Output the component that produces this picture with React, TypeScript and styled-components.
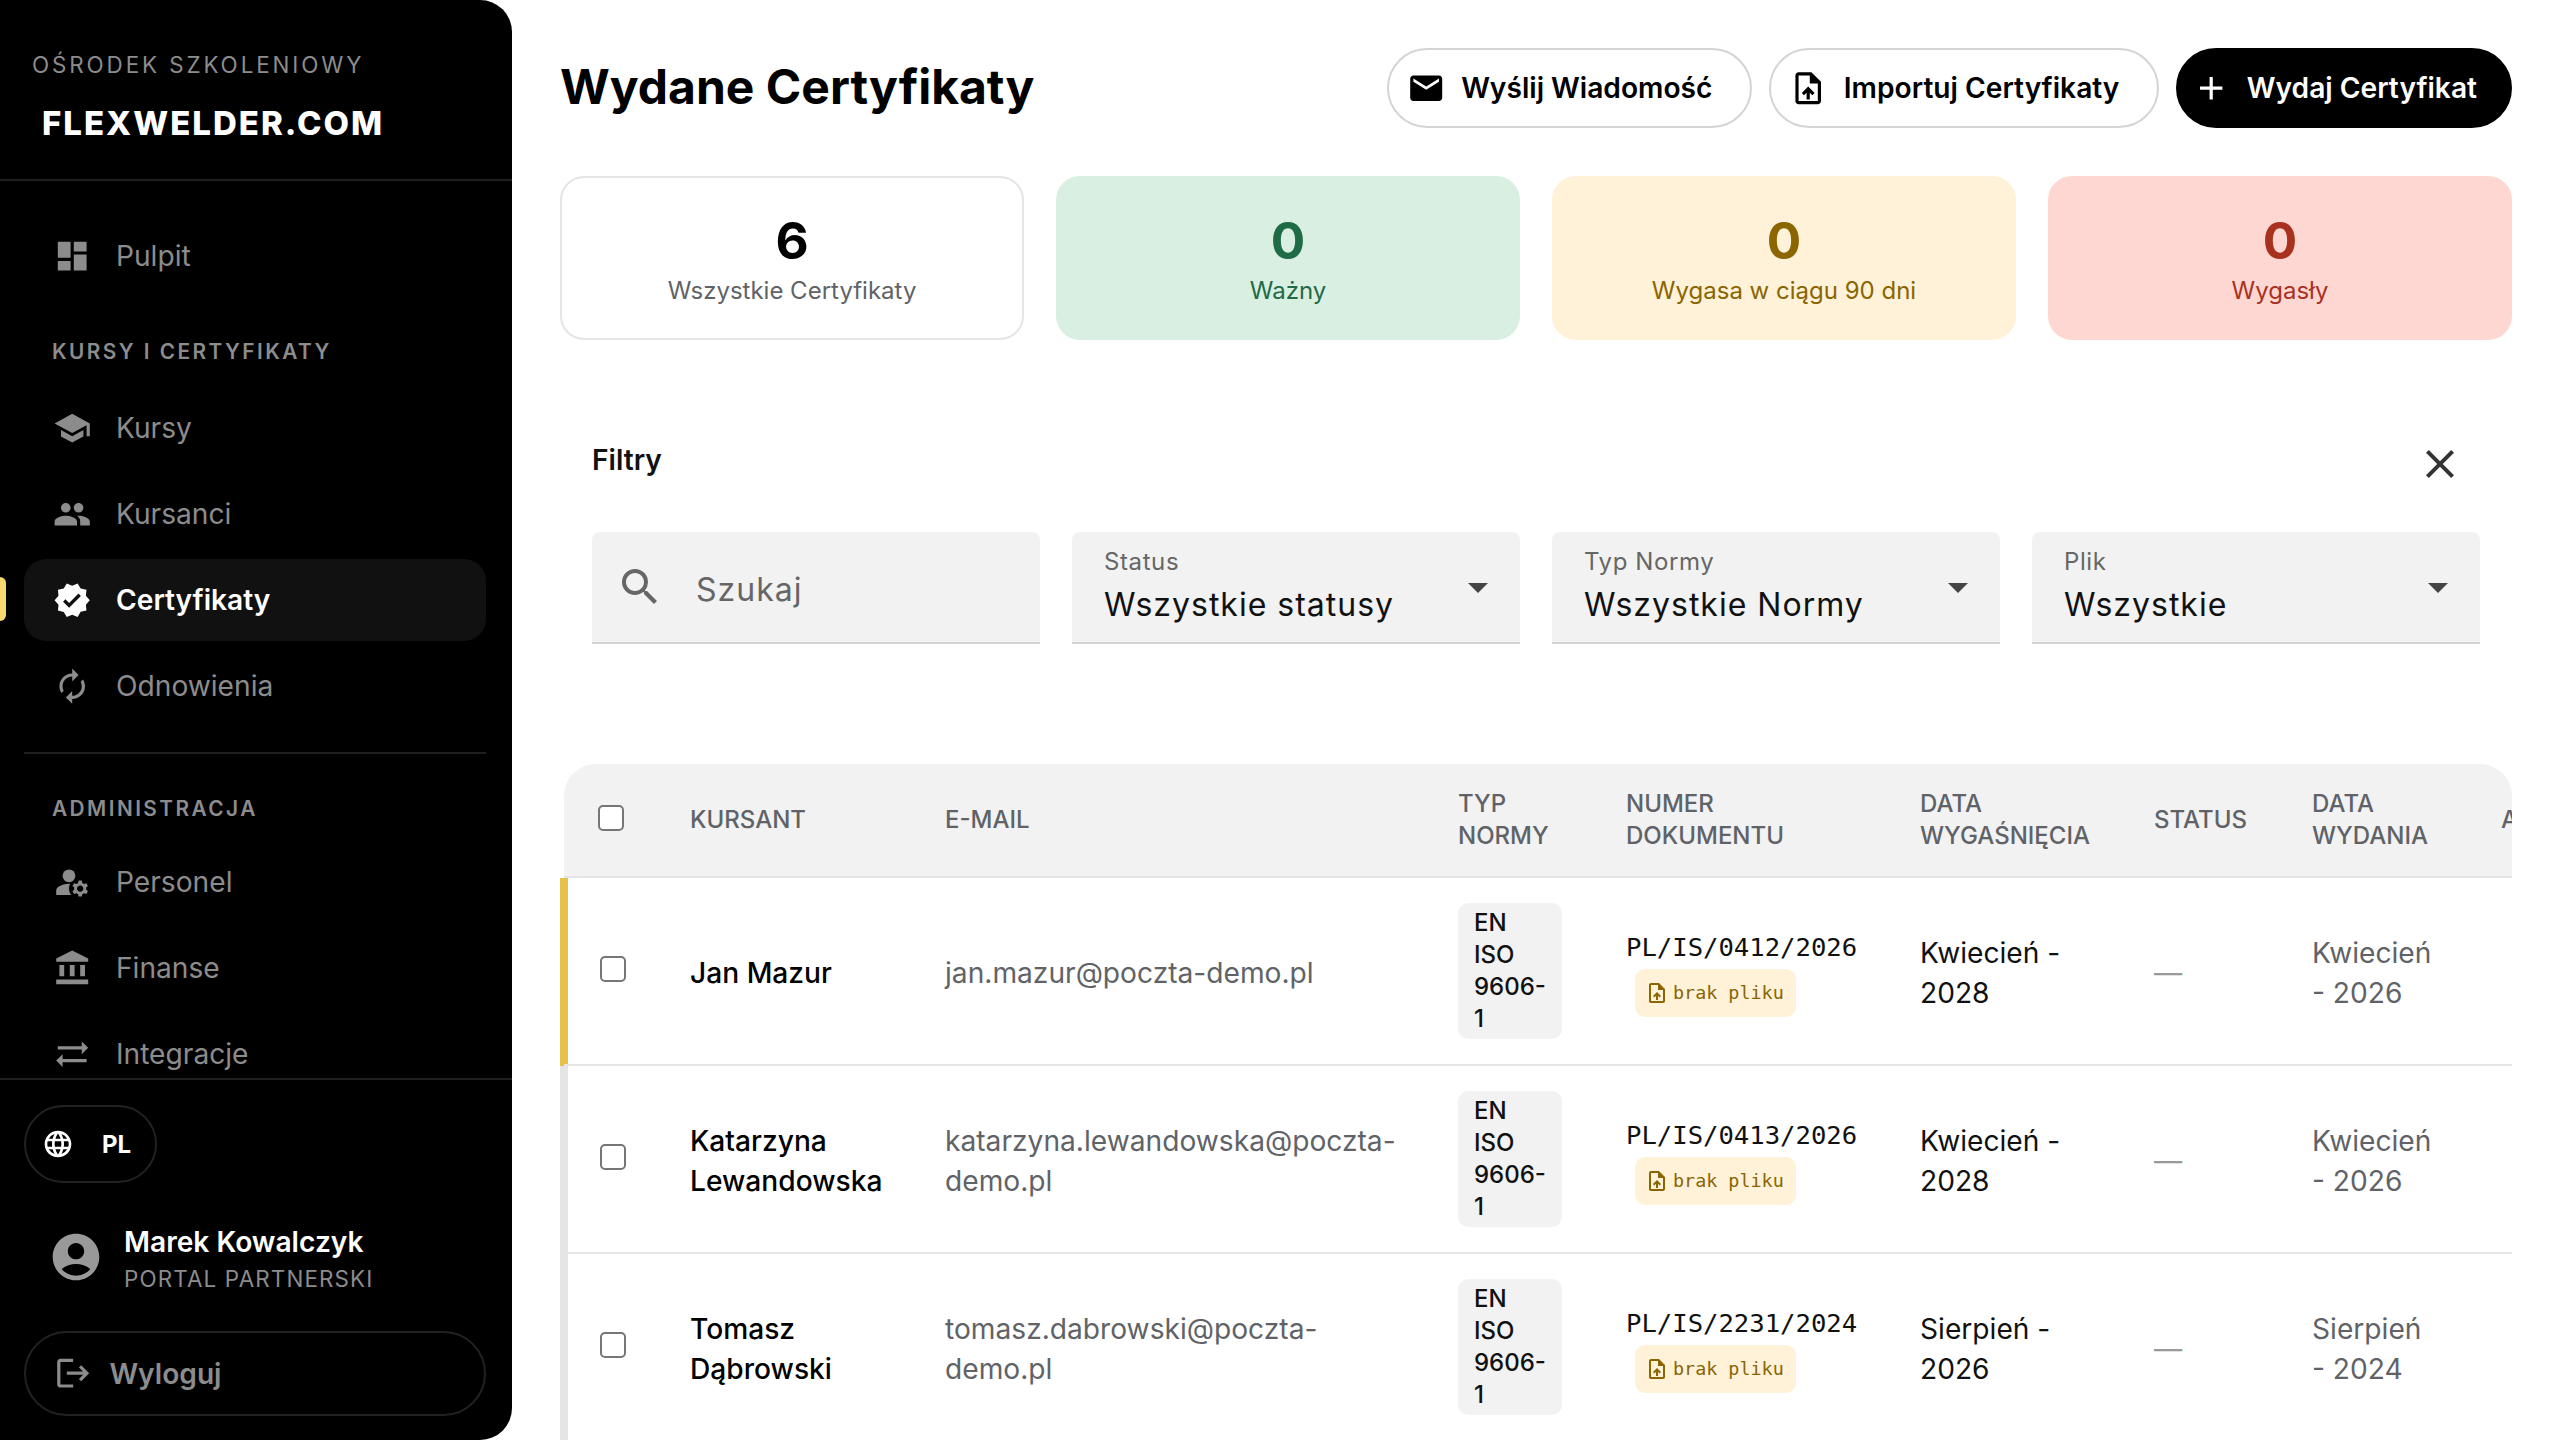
import styled, { createGlobalStyle } from 'styled-components';
import {
  MdDashboard,
  MdSchool,
  MdPeople,
  MdVerified,
  MdAutorenew,
  MdManageAccounts,
  MdAccountBalance,
  MdSyncAlt,
  MdLanguage,
  MdAccountCircle,
  MdLogout,
  MdEmail,
  MdOutlineUploadFile,
  MdAdd,
  MdClose,
  MdSearch,
  MdArrowDropDown,
} from 'react-icons/md';

const GlobalStyle = createGlobalStyle`
  html, body {
    margin: 0;
    padding: 0;
    background: #fff;
    font-family: Inter, "Noto Sans", sans-serif;
    color: #000;
  }
  * { box-sizing: border-box; }
`;

const Page = styled.div`
  width: 100%;
  height: 100vh;
  display: flex;
  overflow: hidden;
`;

const Sidebar = styled.aside`
  width: 512px;
  flex: none;
  height: 100%;
  display: flex;
  flex-direction: column;
  background: #000;
  border-radius: 0 32px 32px 0;
  overflow: hidden;
`;

const Brand = styled.div`
  height: 181px;
  flex: none;
  padding: 52px 32px 0;
  border-bottom: 2px solid #1f1f1f;
`;

const BrandCaption = styled.div`
  font-size: 22.4px;
  line-height: 26px;
  letter-spacing: 2.9px;
  color: #8c8c8c;
`;

const BrandLogo = styled.div`
  margin: 25px 0 0 10px;
  font-size: 33px;
  line-height: 40px;
  font-weight: 800;
  letter-spacing: 2px;
  color: #fff;
`;

const Nav = styled.nav`
  flex: 1;
  min-height: 0;
  overflow: hidden;
  padding: 34px 26px 0 24px;
`;

const NavItem = styled.div<{ $active?: boolean }>`
  position: relative;
  height: 82px;
  margin-bottom: 4px;
  padding-left: 29px;
  display: flex;
  align-items: center;
  gap: 24.6px;
  border-radius: 22px;
  font-size: 28.16px;
  font-weight: ${({ $active }) => ($active ? 600 : 400)};
  color: ${({ $active }) => ($active ? '#fff' : '#8c8c8c')};
  background: ${({ $active }) => ($active ? '#111' : 'transparent')};
  &::before {
    content: '';
    display: ${({ $active }) => ($active ? 'block' : 'none')};
    position: absolute;
    left: -24px;
    top: 18px;
    width: 6px;
    height: 44px;
    background: #f6d96f;
    border-radius: 0 6px 6px 0;
  }
  & svg {
    flex: none;
    font-size: 38.4px;
  }
`;

const NavSection = styled.div<{ $after: number }>`
  height: 40px;
  margin: 34px 0 ${({ $after }) => $after}px;
  padding-left: 28px;
  display: flex;
  align-items: center;
  font-size: 20.8px;
  font-weight: 600;
  letter-spacing: 2.45px;
  color: #8c8c8c;
`;

const NavDivider = styled.div`
  height: 2px;
  margin: 25px 0 32px;
  background: #1f1f1f;
`;

const SidebarFooter = styled.div`
  flex: none;
  height: 362px;
  padding: 25px 26px 0 24px;
  border-top: 2px solid #1f1f1f;
  display: flex;
  flex-direction: column;
`;

const LanguagePill = styled.div`
  width: 133px;
  height: 78px;
  padding-left: 16px;
  display: flex;
  align-items: center;
  gap: 28px;
  border: 2px solid #222;
  border-radius: 40px;
  color: #fff;
  font-size: 24px;
  font-weight: 700;
  & svg {
    font-size: 32px;
  }
`;

const UserRow = styled.div`
  margin-top: 41px;
  padding-left: 24px;
  display: flex;
  align-items: center;
  gap: 20px;
  & svg {
    flex: none;
    margin-bottom: 5.5px;
    font-size: 56px;
    color: #999;
  }
`;

const UserName = styled.div`
  font-size: 28.16px;
  line-height: 36px;
  font-weight: 600;
  color: #fff;
`;

const UserRole = styled.div`
  margin: 2.5px 0 1px;
  font-size: 22.4px;
  line-height: 32px;
  letter-spacing: 1.15px;
  color: #8c8c8c;
`;

const LogoutButton = styled.div`
  margin-top: 35.5px;
  height: 85px;
  padding-left: 28px;
  display: flex;
  align-items: center;
  gap: 17px;
  border: 2px solid #222;
  border-radius: 44px;
  color: #8c8c8c;
  font-size: 28.16px;
  font-weight: 600;
  & svg {
    font-size: 38.4px;
  }
`;

const Main = styled.main`
  flex: 1;
  min-width: 0;
  height: 100%;
  overflow: hidden;
  padding: 48px 48px 0;
`;

const TopBar = styled.header`
  height: 80px;
  display: flex;
  align-items: center;
  justify-content: space-between;
`;

const Title = styled.h1`
  margin: 0 0 4px;
  font-size: 48px;
  font-weight: 700;
`;

const Actions = styled.div`
  display: flex;
  gap: 17px;
`;

const ActionButton = styled.button<{ $primary?: boolean }>`
  height: 80px;
  padding: ${({ $primary }) => ($primary ? '0 33px 0 14px' : '0 38px 0 18px')};
  display: flex;
  align-items: center;
  gap: 16px;
  border-radius: 40px;
  border: 2px solid ${({ $primary }) => ($primary ? '#000' : '#d4d4d4')};
  background: ${({ $primary }) => ($primary ? '#000' : '#fff')};
  color: ${({ $primary }) => ($primary ? '#fff' : '#000')};
  font-family: inherit;
  font-size: 28.16px;
  font-weight: 600;
  & svg {
    font-size: 38.4px;
  }
`;

const Stats = styled.section`
  margin-top: 48px;
  display: grid;
  grid-template-columns: repeat(4, 1fr);
  gap: 32px;
`;

const tones = {
  neutral: { bg: '#fff', border: '#e5e5e5', value: '#000', label: '#5f6368' },
  green: { bg: '#d9efe2', border: '#d9efe2', value: '#1f6b45', label: '#1f6b45' },
  yellow: { bg: '#fff2d9', border: '#fff2d9', value: '#8a6500', label: '#8a6500' },
  red: { bg: '#ffd7d2', border: '#ffd7d2', value: '#a8321f', label: '#a8321f' },
};

type Tone = keyof typeof tones;

const StatCard = styled.div<{ $tone: Tone }>`
  height: 164px;
  padding-top: 2px;
  display: flex;
  flex-direction: column;
  align-items: center;
  justify-content: center;
  border-radius: 24px;
  border: 2px solid ${({ $tone }) => tones[$tone].border};
  background: ${({ $tone }) => tones[$tone].bg};
`;

const StatValue = styled.div<{ $tone: Tone }>`
  font-size: 51.2px;
  line-height: 62px;
  font-weight: 700;
  color: ${({ $tone }) => tones[$tone].value};
`;

const StatLabel = styled.div<{ $tone: Tone }>`
  margin-top: 2px;
  font-size: 24px;
  line-height: 36px;
  color: ${({ $tone }) => tones[$tone].label};
`;

const FilterPanel = styled.section`
  margin-top: 59px;
  padding: 32px;
`;

const FilterHead = styled.div`
  height: 56px;
  padding-top: 2px;
  display: flex;
  align-items: center;
  justify-content: space-between;
  font-size: 28.16px;
  font-weight: 600;
  color: #111;
  & svg {
    font-size: 48px;
    margin: 8px 16px 0 0;
    color: #333;
  }
`;

const FilterGrid = styled.div`
  margin-top: 45px;
  display: grid;
  grid-template-columns: repeat(4, 1fr);
  gap: 32px;
`;

const Field = styled.div`
  height: 112px;
  display: flex;
  align-items: center;
  background: #f2f2f2;
  border-bottom: 2px solid #d4d4d4;
  border-radius: 8px 8px 0 0;
`;

const SearchField = styled(Field)`
  padding-left: 24px;
  gap: 32px;
  & svg {
    flex: none;
    font-size: 48px;
    color: #666;
  }
`;

const Placeholder = styled.span`
  margin-top: 4px;
  font-size: 32px;
  letter-spacing: 1px;
  color: #666;
`;

const SelectField = styled(Field)`
  padding: 0 18px 0 32px;
  justify-content: space-between;
  & svg {
    flex: none;
    font-size: 48px;
    color: #444;
  }
`;

const SelectLabel = styled.div`
  font-size: 24px;
  line-height: 30px;
  letter-spacing: 0.6px;
  color: #666;
`;

const SelectValue = styled.div`
  margin-top: 6px;
  font-size: 32px;
  line-height: 44px;
  letter-spacing: 1px;
  color: #111;
`;

const TableFrame = styled.section`
  margin-top: 88px;
  padding-left: 4px;
  border-top-right-radius: 32px;
  overflow: hidden;
`;

const Table = styled.table`
  width: 2200px;
  table-layout: fixed;
  border-collapse: separate;
  border-spacing: 0;
`;

const HeadCell = styled.th`
  height: 114px;
  padding: 0 26px 0 20px;
  text-align: left;
  vertical-align: middle;
  background: #f2f2f2;
  border-bottom: 2px solid #e5e5e5;
  font-size: 24px;
  line-height: 32px;
  font-weight: 500;
  color: #5f6368;
  &:first-child {
    padding-left: 30px;
    border-top-left-radius: 32px;
  }
`;

const Row = styled.tr<{ $accent?: boolean }>`
  & td:first-child {
    box-shadow: -4px 0 0 ${({ $accent }) => ($accent ? '#e8c04a' : '#e5e5e5')},
      inset 4px 0 0 ${({ $accent }) => ($accent ? '#e8c04a' : '#e5e5e5')};
  }
`;

const Cell = styled.td`
  height: 188px;
  padding: 3px 26px 0 20px;
  vertical-align: middle;
  border-bottom: 2px solid #e5e5e5;
  font-size: 28.16px;
  line-height: 40px;
  color: #111;
`;

const CheckCell = styled(Cell)`
  padding: 0 0 0 32px;
`;

const MutedCell = styled(Cell)`
  padding-right: 40px;
  color: #5f6368;
`;

const NameCell = styled(Cell)`
  font-weight: 500;
  color: #000;
`;

const CheckBox = styled.input.attrs({ type: 'checkbox' })`
  appearance: none;
  display: block;
  width: 26px;
  height: 26px;
  margin: 0 0 5px 4px;
  border: 2.5px solid #767676;
  border-radius: 5px;
  background: #fff;
`;

const NormChip = styled.div`
  width: 104px;
  margin-bottom: 3px;
  padding: 4px 16px;
  border-radius: 10px;
  background: #f2f2f2;
  font-size: 24px;
  line-height: 32px;
  font-weight: 500;
  color: #111;
`;

const DocNumber = styled.div`
  margin-top: 2px;
  font-family: "DejaVu Sans Mono", "Liberation Mono", monospace;
  font-size: 25.6px;
  line-height: 32px;
`;

const MissingFile = styled.div`
  margin: 6px 0 0 9px;
  width: 161px;
  height: 48px;
  padding-left: 10px;
  display: flex;
  align-items: center;
  gap: 4px;
  border-radius: 10px;
  background: #fff2d9;
  color: #8a6500;
  font-family: "DejaVu Sans Mono", "Liberation Mono", monospace;
  font-size: 18.4px;
  & svg {
    flex: none;
    font-size: 24px;
  }
`;

const Dash = styled.span`
  color: #999;
`;

const mainNav = [
  { label: 'Kursy', icon: <MdSchool /> },
  { label: 'Kursanci', icon: <MdPeople /> },
  { label: 'Certyfikaty', icon: <MdVerified />, active: true },
  { label: 'Odnowienia', icon: <MdAutorenew /> },
];

const adminNav = [
  { label: 'Personel', icon: <MdManageAccounts /> },
  { label: 'Finanse', icon: <MdAccountBalance /> },
  { label: 'Integracje', icon: <MdSyncAlt /> },
];

const stats: { value: number; label: string; tone: Tone }[] = [
  { value: 6, label: 'Wszystkie Certyfikaty', tone: 'neutral' },
  { value: 0, label: 'Ważny', tone: 'green' },
  { value: 0, label: 'Wygasa w ciągu 90 dni', tone: 'yellow' },
  { value: 0, label: 'Wygasły', tone: 'red' },
];

const selects = [
  { label: 'Status', value: 'Wszystkie statusy' },
  { label: 'Typ Normy', value: 'Wszystkie Normy' },
  { label: 'Plik', value: 'Wszystkie' },
];

const columns = [
  { title: '', width: 106 },
  { title: 'KURSANT', width: 255 },
  { title: 'E-MAIL', width: 513 },
  { title: 'TYP NORMY', width: 168 },
  { title: 'NUMER DOKUMENTU', width: 294 },
  { title: 'DATA WYGAŚNIĘCIA', width: 234 },
  { title: 'STATUS', width: 158 },
  { title: 'DATA WYDANIA', width: 189 },
  { title: 'AKCJE', width: 283 },
];

const rows = [
  {
    name: 'Jan Mazur',
    email: 'jan.mazur@poczta-demo.pl',
    doc: 'PL/IS/0412/2026',
    expires: 'Kwiecień - 2028',
    issued: 'Kwiecień - 2026',
    accent: true,
  },
  {
    name: 'Katarzyna Lewandowska',
    email: 'katarzyna.lewandowska@poczta-demo.pl',
    doc: 'PL/IS/0413/2026',
    expires: 'Kwiecień - 2028',
    issued: 'Kwiecień - 2026',
  },
  {
    name: 'Tomasz Dąbrowski',
    email: 'tomasz.dabrowski@poczta-demo.pl',
    doc: 'PL/IS/2231/2024',
    expires: 'Sierpień - 2026',
    issued: 'Sierpień - 2024',
  },
];

export default function App() {
  return (
    <Page>
      <GlobalStyle />
      <Sidebar>
        <Brand>
          <BrandCaption>OŚRODEK SZKOLENIOWY</BrandCaption>
          <BrandLogo>FLEXWELDER.COM</BrandLogo>
        </Brand>
        <Nav>
          <NavItem>
            <MdDashboard />
            Pulpit
          </NavItem>
          <NavSection $after={16}>KURSY I CERTYFIKATY</NavSection>
          {mainNav.map((item) => (
            <NavItem key={item.label} $active={item.active}>
              {item.icon}
              {item.label}
            </NavItem>
          ))}
          <NavDivider />
          <NavSection $after={13}>ADMINISTRACJA</NavSection>
          {adminNav.map((item) => (
            <NavItem key={item.label}>
              {item.icon}
              {item.label}
            </NavItem>
          ))}
        </Nav>
        <SidebarFooter>
          <LanguagePill>
            <MdLanguage />
            PL
          </LanguagePill>
          <UserRow>
            <MdAccountCircle />
            <div>
              <UserName>Marek Kowalczyk</UserName>
              <UserRole>PORTAL PARTNERSKI</UserRole>
            </div>
          </UserRow>
          <LogoutButton>
            <MdLogout />
            Wyloguj
          </LogoutButton>
        </SidebarFooter>
      </Sidebar>
      <Main>
        <TopBar>
          <Title>Wydane Certyfikaty</Title>
          <Actions>
            <ActionButton>
              <MdEmail />
              Wyślij Wiadomość
            </ActionButton>
            <ActionButton>
              <MdOutlineUploadFile />
              Importuj Certyfikaty
            </ActionButton>
            <ActionButton $primary>
              <MdAdd />
              Wydaj Certyfikat
            </ActionButton>
          </Actions>
        </TopBar>
        <Stats>
          {stats.map((stat) => (
            <StatCard key={stat.label} $tone={stat.tone}>
              <StatValue $tone={stat.tone}>{stat.value}</StatValue>
              <StatLabel $tone={stat.tone}>{stat.label}</StatLabel>
            </StatCard>
          ))}
        </Stats>
        <FilterPanel>
          <FilterHead>
            Filtry
            <MdClose />
          </FilterHead>
          <FilterGrid>
            <SearchField>
              <MdSearch />
              <Placeholder>Szukaj</Placeholder>
            </SearchField>
            {selects.map((select) => (
              <SelectField key={select.label}>
                <div>
                  <SelectLabel>{select.label}</SelectLabel>
                  <SelectValue>{select.value}</SelectValue>
                </div>
                <MdArrowDropDown />
              </SelectField>
            ))}
          </FilterGrid>
        </FilterPanel>
        <TableFrame>
          <Table>
            <colgroup>
              {columns.map((column) => (
                <col key={column.title} width={column.width} />
              ))}
            </colgroup>
            <thead>
              <tr>
                <HeadCell>
                  <CheckBox readOnly />
                </HeadCell>
                {columns.slice(1).map((column) => (
                  <HeadCell key={column.title}>{column.title}</HeadCell>
                ))}
              </tr>
            </thead>
            <tbody>
              {rows.map((row) => (
                <Row key={row.doc} $accent={row.accent}>
                  <CheckCell>
                    <CheckBox readOnly />
                  </CheckCell>
                  <NameCell>{row.name}</NameCell>
                  <MutedCell>{row.email}</MutedCell>
                  <Cell>
                    <NormChip>EN ISO 9606-1</NormChip>
                  </Cell>
                  <Cell>
                    <DocNumber>{row.doc}</DocNumber>
                    <MissingFile>
                      <MdOutlineUploadFile />
                      brak pliku
                    </MissingFile>
                  </Cell>
                  <Cell>{row.expires}</Cell>
                  <Cell>
                    <Dash>—</Dash>
                  </Cell>
                  <MutedCell>{row.issued}</MutedCell>
                  <Cell />
                </Row>
              ))}
            </tbody>
          </Table>
        </TableFrame>
      </Main>
    </Page>
  );
}
